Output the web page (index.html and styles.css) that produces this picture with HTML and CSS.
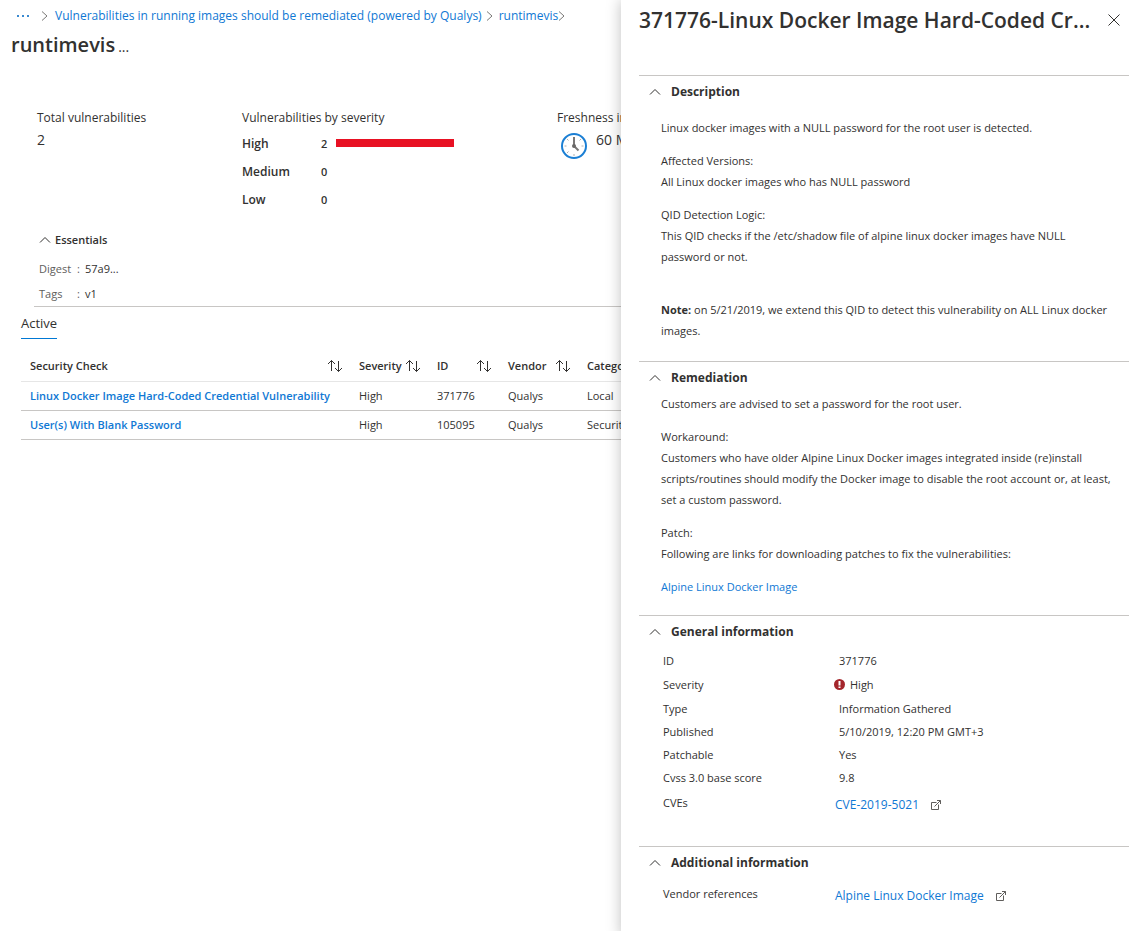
FILE: index.html
```html
<!DOCTYPE html>
<html lang="en">
<head>
<meta charset="utf-8">
<title>runtimevis</title>
<link rel="stylesheet" href="styles.css">
</head>
<body>
<svg class="defs" aria-hidden="true">
  <symbol id="sort" viewBox="0 0 16 14"><path d="M4.500 12V1.500M1 5l3.500-3.500L8 5M11.500 2v10.500M8 9l3.500 3.500L15 9" fill="none" stroke="#323130"/></symbol>
  <symbol id="up" viewBox="0 0 12 8"><path d="M1 6.500l5-5 5 5" fill="none" stroke="currentColor"/></symbol>
  <symbol id="right" viewBox="0 0 8 10"><path d="M1 .5L6 5 1 9.500" fill="none" stroke="#7a7877"/></symbol>
  <symbol id="external" viewBox="0 0 10 10"><path d="M5.500 2.500H.5v7h7v-5M3.500 6.500l6-6M6 .5h3.500V4" fill="none" stroke="#605e5c"/></symbol>
</svg>
<div class="shell">
  <main class="page">
    <nav class="crumbs" aria-label="Breadcrumb">
      <button class="crumb-more" type="button" aria-label="More levels"><svg width="14" height="4" viewBox="0 0 14 4"><path d="M1 1h2v2H1zM6 1h2v2H6zM11 1h2v2h-2z" fill="#3a8ad0"/></svg></button>
      <svg class="icon-right first"><use href="#right"/></svg>
      <a href="#">Vulnerabilities in running images should be remediated (powered by Qualys)</a>
      <svg class="icon-right middle"><use href="#right"/></svg>
      <a href="#">runtimevis</a>
      <svg class="icon-right"><use href="#right"/></svg>
    </nav>
    <header class="heading">
      <h1>runtimevis</h1>
      <button class="title-more" type="button" aria-label="More actions">...</button>
    </header>

    <section class="stats">
      <div class="stat">
        <h2>Total vulnerabilities</h2>
        <p class="value">2</p>
      </div>
      <div class="stat">
        <h2>Vulnerabilities by severity</h2>
        <dl class="severity">
          <dt>High</dt><dd>2</dd><dd class="bar"></dd>
          <dt>Medium</dt><dd>0</dd><dd></dd>
          <dt>Low</dt><dd>0</dd><dd></dd>
        </dl>
      </div>
      <div class="stat">
        <h2>Freshness interval</h2>
        <div class="fresh">
          <svg width="28" height="28" viewBox="0 0 28 28">
            <circle cx="14" cy="14" r="12" fill="#fff" stroke="#1b7fd4" stroke-width="2"/>
            <path d="M14 22v2M4.500 14h2M21.500 14h2M7 7l1.500 1.500M19.500 8.500L21 7M8.500 19.500L7 21" stroke="#b0b0b0" fill="none"/>
            <path d="M14 5v9" stroke="#7a7877" stroke-width="2" fill="none"/>
            <path d="M14 14l4.500 4.500" stroke="#7a7877" stroke-width="2" fill="none"/>
            <circle cx="14" cy="14" r="2" fill="#6a6867"/>
          </svg>
          <p class="value">60 Min</p>
        </div>
      </div>
    </section>

    <section class="essentials">
      <button class="essentials-toggle" type="button" aria-expanded="true"><svg class="icon-up"><use href="#up"/></svg>Essentials</button>
      <dl class="facts">
        <dt>Digest</dt><dd><span class="colon">:</span>57a9...</dd>
        <dt>Tags</dt><dd><span class="colon">:</span>v1</dd>
      </dl>
    </section>

    <div class="tabs" role="tablist"><button class="tab" type="button" role="tab" aria-selected="true">Active</button></div>

    <table class="checks">
      <colgroup><col class="c-check"><col class="c-sev"><col class="c-id"><col class="c-vendor"><col></colgroup>
      <thead>
        <tr>
          <th scope="col"><div class="th">Security Check<svg class="icon-sort"><use href="#sort"/></svg></div></th>
          <th scope="col"><div class="th">Severity<svg class="icon-sort"><use href="#sort"/></svg></div></th>
          <th scope="col"><div class="th">ID<svg class="icon-sort"><use href="#sort"/></svg></div></th>
          <th scope="col"><div class="th">Vendor<svg class="icon-sort"><use href="#sort"/></svg></div></th>
          <th scope="col">Category</th>
        </tr>
      </thead>
      <tbody>
        <tr><td><a href="#">Linux Docker Image Hard-Coded Credential Vulnerability</a></td><td>High</td><td>371776</td><td>Qualys</td><td>Local</td></tr>
        <tr><td><a href="#">User(s) With Blank Password</a></td><td>High</td><td>105095</td><td>Qualys</td><td>Security Policy</td></tr>
      </tbody>
    </table>
  </main>

  <aside class="panel" aria-labelledby="panel-title">
    <header class="panel-head">
      <h2 id="panel-title">371776-Linux Docker Image Hard-Coded Cr...</h2>
      <button class="close" type="button" aria-label="Close"><svg width="12" height="12" viewBox="0 0 12 12"><path d="M.5.5l11 11M11.500.5l-11 11" stroke="#323130" fill="none"/></svg></button>
    </header>

    <section class="block">
      <h3><button type="button" aria-expanded="true"><svg class="icon-up"><use href="#up"/></svg>Description</button></h3>
      <div class="prose roomy">
        <p>Linux docker images with a NULL password for the root user is detected.</p>
        <p>Affected Versions:<br>All Linux docker images who has NULL password</p>
        <p>QID Detection Logic:<br>This QID checks if the /etc/shadow file of alpine linux docker images have NULL password or not.</p>
        <p class="note"><strong>Note:</strong> on 5/21/2019, we extend this QID to detect this vulnerability on ALL Linux docker images.</p>
      </div>
    </section>

    <section class="block">
      <h3><button type="button" aria-expanded="true"><svg class="icon-up"><use href="#up"/></svg>Remediation</button></h3>
      <div class="prose">
        <p>Customers are advised to set a password for the root user.</p>
        <p>Workaround:<br>Customers who have older Alpine Linux Docker images integrated inside (re)install scripts/routines should modify the Docker image to disable the root account or, at least, set a custom password.</p>
        <p>Patch:<br>Following are links for downloading patches to fix the vulnerabilities:</p>
        <p><a href="#">Alpine Linux Docker Image</a></p>
      </div>
    </section>

    <section class="block">
      <h3><button type="button" aria-expanded="true"><svg class="icon-up"><use href="#up"/></svg>General information</button></h3>
      <dl class="info">
        <dt>ID</dt><dd>371776</dd>
        <dt>Severity</dt><dd class="with-icon"><svg width="11" height="11" viewBox="0 0 11 11"><circle cx="5.500" cy="5.500" r="5.500" fill="#a4262c"/><path d="M4.500 2h2v4.500h-2zM4.500 7.500h2v1.500h-2z" fill="#fff"/></svg>High</dd>
        <dt>Type</dt><dd>Information Gathered</dd>
        <dt>Published</dt><dd>5/10/2019, 12:20 PM GMT+3</dd>
        <dt>Patchable</dt><dd>Yes</dd>
        <dt>Cvss 3.0 base score</dt><dd>9.8</dd>
        <dt>CVEs</dt><dd class="link"><a href="#">CVE-2019-5021</a><svg class="icon-ext"><use href="#external"/></svg></dd>
      </dl>
    </section>

    <section class="block">
      <h3><button type="button" aria-expanded="true"><svg class="icon-up"><use href="#up"/></svg>Additional information</button></h3>
      <dl class="info">
        <dt>Vendor references</dt><dd class="link"><a href="#">Alpine Linux Docker Image</a><svg class="icon-ext"><use href="#external"/></svg></dd>
      </dl>
    </section>
  </aside>
</div>
</body>
</html>
```
FILE: styles.css
```css
* { box-sizing: border-box; }

body {
  margin: 0;
  background: #fff;
  color: #323130;
  font: 11px/18px "Open Sans", "Noto Sans", sans-serif;
}

h1, h2, h3, p, dl, dd { margin: 0; }
a { color: #0f78d4; text-decoration: none; }
button { padding: 0; border: 0; background: none; color: inherit; font: inherit; }
svg { display: block; flex: none; }

.defs { position: absolute; width: 0; height: 0; }
.icon-up { width: 12px; height: 8px; }
.icon-right { width: 8px; height: 10px; }
.icon-sort { width: 16px; height: 14px; }
.icon-ext { width: 10px; height: 10px; }

.shell { position: relative; min-height: 100vh; overflow: hidden; }
.page { white-space: nowrap; }

.crumbs { display: flex; align-items: center; height: 31px; padding-left: 16px; font-size: 12px; }
.crumb-more { width: 14px; }
.first { margin: 0 6px 0 11px; }
.middle { margin: 0 5px 0 4px; }

.heading { display: flex; align-items: baseline; gap: 3px; padding-left: 11px; }
h1 { font-size: 20px; line-height: 28px; font-weight: 600; }
.title-more { font-size: 14px; }

.stats { display: grid; grid-template-columns: 205px 315px 1fr; padding: 50px 0 0 37px; }
.stats h2 { font-size: 12px; line-height: 18px; font-weight: 400; }
.value { font-size: 14px; line-height: 20px; padding-top: 3px; }
.severity { display: grid; grid-template-columns: 79px 15px 118px; align-items: center; grid-auto-rows: 28px; font-weight: 600; padding-top: 3px; }
.severity dt { font-size: 12px; }
.bar { height: 8px; margin-bottom: 2px; background: #e81123; }
.fresh { display: flex; gap: 8px; padding-left: 3px; }
.fresh svg { margin-top: 5px; }

.essentials { margin-left: 34px; padding: 16px 0 0 5px; border-bottom: 1px solid #c8c6c4; }
.essentials-toggle { display: flex; align-items: center; gap: 4px; font-weight: 600; height: 20px; }
.facts { display: grid; grid-template-columns: 38px 1fr; line-height: 25px; padding-top: 6px; }
.facts dt { color: #605e5c; }
.colon { display: inline-block; width: 8px; color: #605e5c; }

.tabs { padding: 7px 0 0 21px; }
.tab { display: block; height: 25px; padding-bottom: 6px; border-bottom: 1px solid #0078d4; font-size: 13px; }

.checks { width: 100%; table-layout: fixed; border-collapse: collapse; margin-top: 13px; margin-left: 21px; }
.c-check { width: 329px; }
.c-sev { width: 78px; }
.c-id { width: 71px; }
.c-vendor { width: 79px; }
.checks th { height: 29px; padding: 0 0 0 9px; text-align: left; font-weight: 600; border-bottom: 1px solid #e6e6e6; }
.th { display: flex; justify-content: space-between; align-items: center; padding-right: 7px; }
.checks td { height: 29px; padding: 1px 0 0 9px; border-bottom: 1px solid #c8c6c4; }
.checks td a { font-weight: 600; }

.panel {
  position: absolute;
  top: 0;
  right: 0;
  width: 521px;
  min-height: 100%;
  padding: 0 13px 0 18px;
  background: #fff;
  box-shadow: 0 0 14px rgba(0, 0, 0, .25);
}
.panel-head { display: flex; justify-content: space-between; align-items: center; height: 39px; margin-bottom: 36px; padding-right: 9px; white-space: nowrap; }
.panel-head h2 { font-size: 21px; line-height: 30px; font-weight: 600; }
.close { width: 12px; height: 12px; }

.block { border-top: 1px solid #c8c6c4; }
h3 { font-size: 12px; line-height: 20px; font-weight: 700; padding: 6px 0 5px 10px; }
h3 button { display: flex; align-items: center; gap: 10px; }
.prose { padding: 0 12px 18px 22px; line-height: 21px; }
.prose.roomy { padding-top: 10px; padding-bottom: 20px; }
.prose p + p { margin-top: 12px; }
.prose p + p.note { margin-top: 32px; }

.info { display: grid; grid-template-columns: 176px 1fr; align-items: center; line-height: 23px; padding: 2px 0 30px 24px; }
.with-icon { display: flex; align-items: center; gap: 5px; height: 25px; margin-left: -5px; }
.link { display: flex; align-items: center; gap: 12px; height: 27px; padding-top: 4px; margin-left: -4px; font-size: 12px; }
```
